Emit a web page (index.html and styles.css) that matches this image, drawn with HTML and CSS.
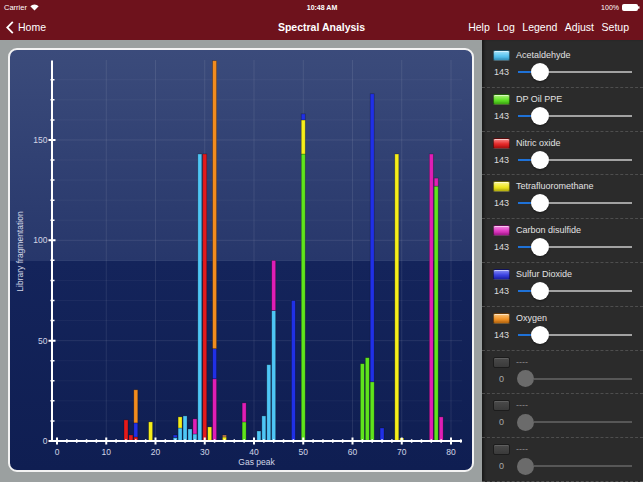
FILE: index.html
```html
<!DOCTYPE html>
<html>
<head>
<meta charset="utf-8">
<title>Spectral Analysis</title>
<link rel="stylesheet" href="styles.css">
</head>
<body>
<div class="app">
  <header class="topbar">
    <div class="status">
      <div class="status-left">
        <span>Carrier</span>
        <svg class="wifi" width="9" height="7" viewBox="0 0 9 7"><path d="M4.5 6.6 L0.3 2.3 A6 6 0 0 1 8.7 2.3 Z" fill="#fff"/></svg>
      </div>
      <div class="status-time">10:48 AM</div>
      <div class="status-right">
        <span>100%</span>
        <svg class="battery" width="18" height="7" viewBox="0 0 18 7"><rect x="0.5" y="0.5" width="15" height="6" rx="1" fill="#fff" stroke="#fff"/><rect x="16" y="2.3" width="1.5" height="2.4" fill="#fff"/></svg>
      </div>
    </div>
    <nav class="nav">
      <div class="back">
        <svg class="chev" width="8" height="13" viewBox="0 0 8 13"><polyline points="6.8,0.8 1.2,6.5 6.8,12.2" fill="none" stroke="#fff" stroke-width="1.8"/></svg>
        <span>Home</span>
      </div>
      <div class="title">Spectral Analysis</div>
      <div class="actions">
        <span>Help</span><span>Log</span><span>Legend</span><span>Adjust</span><span>Setup</span>
      </div>
    </nav>
  </header>
  <main class="main">
    <section class="chart-area">
      <div class="panel">
        <svg class="chart" width="462" height="420" viewBox="10 50 462 420">
          <g class="grid-minor" stroke="rgba(255,255,255,0.045)" stroke-width="1">
            <path d="M52 420.93H462M52 400.86H462M52 380.79H462M52 360.72H462M52 320.58H462M52 300.51H462M52 280.44H462M52 260.37H462M52 220.23H462M52 200.16H462M52 180.09H462M52 160.02H462M52 119.88H462M52 99.81H462M52 79.74H462"/>
          </g>
          <g class="grid-major" stroke="rgba(255,255,255,0.09)" stroke-width="1">
            <path d="M52 340.65H462M52 240.3H462M52 139.95H462"/>
            <path d="M106.25 60V441M155.5 60V441M204.75 60V441M254 60V441M303.25 60V441M352.5 60V441M401.75 60V441M451 60V441"/>
          </g>
          <g class="bars" stroke="rgba(0,0,0,0.35)" stroke-width="0.7">
            <rect x="124" y="419.9" width="4" height="21.1" fill="#e41a1c"/>
            <rect x="128.9" y="435" width="4" height="6" fill="#e41a1c"/>
            <rect x="133.8" y="437" width="4" height="4" fill="#e41a1c"/>
            <rect x="133.8" y="422.9" width="4" height="14.1" fill="#2030e6"/>
            <rect x="133.8" y="389.8" width="4" height="33.1" fill="#f28c1e"/>
            <rect x="148.6" y="421.9" width="4" height="19.1" fill="#f6ee1a"/>
            <rect x="173.2" y="437.4" width="4" height="3.6" fill="#4ec6f6"/>
            <rect x="173.2" y="435" width="4" height="2.4" fill="#2030e6"/>
            <rect x="178.1" y="428" width="4" height="13" fill="#4ec6f6"/>
            <rect x="178.1" y="416.9" width="4" height="11.1" fill="#f6ee1a"/>
            <rect x="183.05" y="415.9" width="4" height="25.1" fill="#4ec6f6"/>
            <rect x="188" y="429" width="4" height="12" fill="#4ec6f6"/>
            <rect x="192.9" y="434" width="4" height="7" fill="#4ec6f6"/>
            <rect x="192.9" y="418.9" width="4" height="15.1" fill="#e01eb6"/>
            <rect x="197.8" y="154" width="4" height="287" fill="#4ec6f6"/>
            <rect x="202.75" y="154" width="4" height="287" fill="#e41a1c"/>
            <rect x="207.7" y="426.95" width="4" height="14.05" fill="#f6ee1a"/>
            <rect x="212.6" y="378.8" width="4" height="62.2" fill="#e01eb6"/>
            <rect x="212.6" y="348.7" width="4" height="30.1" fill="#2030e6"/>
            <rect x="212.6" y="60.7" width="4" height="288" fill="#f28c1e"/>
            <rect x="222.45" y="437" width="4" height="4" fill="#f6ee1a"/>
            <rect x="222.45" y="435" width="4" height="2" fill="#c07a50"/>
            <rect x="242.15" y="421.9" width="4" height="19.1" fill="#5fe41c"/>
            <rect x="242.15" y="402.9" width="4" height="19" fill="#e01eb6"/>
            <rect x="256.9" y="431" width="4" height="10" fill="#4ec6f6"/>
            <rect x="261.85" y="415.9" width="4" height="25.1" fill="#4ec6f6"/>
            <rect x="266.8" y="364.7" width="4" height="76.3" fill="#4ec6f6"/>
            <rect x="271.7" y="310.5" width="4" height="130.5" fill="#4ec6f6"/>
            <rect x="271.7" y="260.4" width="4" height="50.1" fill="#e01eb6"/>
            <rect x="291.4" y="300.5" width="4" height="140.5" fill="#2030e6"/>
            <rect x="301.25" y="154" width="4" height="287" fill="#5fe41c"/>
            <rect x="301.25" y="119.9" width="4" height="34.1" fill="#f6ee1a"/>
            <rect x="301.25" y="113.9" width="4" height="6" fill="#2030e6"/>
            <rect x="360.35" y="363.7" width="4" height="77.3" fill="#5fe41c"/>
            <rect x="365.3" y="357.7" width="4" height="83.3" fill="#5fe41c"/>
            <rect x="370.2" y="381.8" width="4" height="59.2" fill="#5fe41c"/>
            <rect x="370.2" y="93.8" width="4" height="288" fill="#2030e6"/>
            <rect x="380.05" y="428" width="4" height="13" fill="#2030e6"/>
            <rect x="394.8" y="154" width="4" height="287" fill="#f6ee1a"/>
            <rect x="399.75" y="438" width="4" height="3" fill="#f6ee1a"/>
            <rect x="429.3" y="154" width="4" height="287" fill="#e01eb6"/>
            <rect x="434.2" y="186.1" width="4" height="254.9" fill="#5fe41c"/>
            <rect x="434.2" y="178.1" width="4" height="8" fill="#e01eb6"/>
            <rect x="439.15" y="416.9" width="4" height="24.1" fill="#e01eb6"/>
          </g>
          <g class="axes" stroke="#ffffff" fill="none">
            <path d="M52 60.5V442" stroke-width="2"/>
            <path d="M51 441H462" stroke-width="2"/>
            <path stroke-width="1.5" d="M50.5 420.93H54.5M50.5 400.86H54.5M50.5 380.79H54.5M50.5 360.72H54.5M50.5 320.58H54.5M50.5 300.51H54.5M50.5 280.44H54.5M50.5 260.37H54.5M50.5 220.23H54.5M50.5 200.16H54.5M50.5 180.09H54.5M50.5 160.02H54.5M50.5 119.88H54.5M50.5 99.81H54.5M50.5 79.74H54.5"/>
            <path stroke-width="2" d="M48.5 340.65H55.5M48.5 240.3H55.5M48.5 139.95H55.5M48.5 441H55.5"/>
            <path stroke-width="1.5" d="M66.85 439.3V442.7M76.7 439.3V442.7M86.55 439.3V442.7M96.4 439.3V442.7M116.1 439.3V442.7M125.95 439.3V442.7M135.8 439.3V442.7M145.65 439.3V442.7M165.35 439.3V442.7M175.2 439.3V442.7M185.05 439.3V442.7M194.9 439.3V442.7M214.6 439.3V442.7M224.45 439.3V442.7M234.3 439.3V442.7M244.15 439.3V442.7M263.85 439.3V442.7M273.7 439.3V442.7M283.55 439.3V442.7M293.4 439.3V442.7M313.1 439.3V442.7M322.95 439.3V442.7M332.8 439.3V442.7M342.65 439.3V442.7M362.35 439.3V442.7M372.2 439.3V442.7M382.05 439.3V442.7M391.9 439.3V442.7M411.6 439.3V442.7M421.45 439.3V442.7M431.3 439.3V442.7M441.15 439.3V442.7M460.85 439.3V442.7"/>
            <path stroke-width="2" d="M57 437.5V444.5M106.25 437.5V444.5M155.5 437.5V444.5M204.75 437.5V444.5M254 437.5V444.5M303.25 437.5V444.5M352.5 437.5V444.5M401.75 437.5V444.5M451 437.5V444.5"/>
          </g>
          <g class="labels">
            <text x="47.5" y="143" text-anchor="end">150</text>
            <text x="47.5" y="243.3" text-anchor="end">100</text>
            <text x="47.5" y="343.7" text-anchor="end">50</text>
            <text x="47.5" y="444" text-anchor="end">0</text>
            <text x="57" y="454.5" text-anchor="middle">0</text>
            <text x="106.25" y="454.5" text-anchor="middle">10</text>
            <text x="155.5" y="454.5" text-anchor="middle">20</text>
            <text x="204.75" y="454.5" text-anchor="middle">30</text>
            <text x="254" y="454.5" text-anchor="middle">40</text>
            <text x="303.25" y="454.5" text-anchor="middle">50</text>
            <text x="352.5" y="454.5" text-anchor="middle">60</text>
            <text x="401.75" y="454.5" text-anchor="middle">70</text>
            <text x="451" y="454.5" text-anchor="middle">80</text>
            <text x="256.5" y="464.5" text-anchor="middle">Gas peak</text>
            <text x="0" y="0" text-anchor="middle" transform="translate(23 251.5) rotate(-90)">Library fragmentation</text>
          </g>
        </svg>
      </div>
    </section>
    <aside class="sidebar">
      <div class="gas">
        <span class="sw sw-lightblue"></span><span class="name">Acetaldehyde</span>
        <span class="val">143</span>
        <div class="slider"><span class="fill"></span><span class="thumb"></span><span class="rest"></span></div>
      </div>
      <div class="gas">
        <span class="sw sw-green"></span><span class="name">DP Oil PPE</span>
        <span class="val">143</span>
        <div class="slider"><span class="fill"></span><span class="thumb"></span><span class="rest"></span></div>
      </div>
      <div class="gas">
        <span class="sw sw-red"></span><span class="name">Nitric oxide</span>
        <span class="val">143</span>
        <div class="slider"><span class="fill"></span><span class="thumb"></span><span class="rest"></span></div>
      </div>
      <div class="gas">
        <span class="sw sw-yellow"></span><span class="name">Tetrafluoromethane</span>
        <span class="val">143</span>
        <div class="slider"><span class="fill"></span><span class="thumb"></span><span class="rest"></span></div>
      </div>
      <div class="gas">
        <span class="sw sw-magenta"></span><span class="name">Carbon disulfide</span>
        <span class="val">143</span>
        <div class="slider"><span class="fill"></span><span class="thumb"></span><span class="rest"></span></div>
      </div>
      <div class="gas">
        <span class="sw sw-blue"></span><span class="name">Sulfur Dioxide</span>
        <span class="val">143</span>
        <div class="slider"><span class="fill"></span><span class="thumb"></span><span class="rest"></span></div>
      </div>
      <div class="gas">
        <span class="sw sw-orange"></span><span class="name">Oxygen</span>
        <span class="val">143</span>
        <div class="slider"><span class="fill"></span><span class="thumb"></span><span class="rest"></span></div>
      </div>
      <div class="gas empty">
        <span class="sw sw-empty"></span><span class="name">----</span>
        <span class="val">0</span>
        <div class="slider"><span class="thumb"></span><span class="rest"></span></div>
      </div>
      <div class="gas empty">
        <span class="sw sw-empty"></span><span class="name">----</span>
        <span class="val">0</span>
        <div class="slider"><span class="thumb"></span><span class="rest"></span></div>
      </div>
      <div class="gas empty">
        <span class="sw sw-empty"></span><span class="name">----</span>
        <span class="val">0</span>
        <div class="slider"><span class="thumb"></span><span class="rest"></span></div>
      </div>
    </aside>
  </main>
</div>
</body>
</html>
```
FILE: styles.css
```css
html, body {
  margin: 0;
  padding: 0;
}
body {
  width: 643px;
  height: 482px;
  overflow: hidden;
  font-family: "Liberation Sans", Arial, sans-serif;
  background: #9ba0a0;
  color: #fff;
}
.app {
  display: flex;
  flex-direction: column;
  height: 482px;
}

/* ---------- top bars ---------- */
.topbar {
  background: #6e121c;
}
.status {
  height: 14px;
  display: grid;
  grid-template-columns: 1fr auto 1fr;
  align-items: center;
  padding: 0 3px 0 4px;
  font-size: 7.5px;
}
.status-left {
  display: flex;
  align-items: center;
  gap: 3px;
}
.status-time {
  font-weight: bold;
  font-size: 7px;
}
.status-right {
  justify-self: end;
  display: flex;
  align-items: center;
  gap: 3px;
  font-size: 7px;
}
.wifi, .battery, .chev {
  display: block;
}
.nav {
  height: 26px;
  display: grid;
  grid-template-columns: 1fr auto 1fr;
  align-items: center;
  padding: 0 6px;
  font-size: 10.5px;
}
.back {
  display: flex;
  align-items: center;
  gap: 4px;
}
.title {
  font-weight: bold;
}
.actions {
  justify-self: end;
  display: flex;
  gap: 7.5px;
  padding-right: 8px;
}

/* ---------- main ---------- */
.main {
  display: flex;
  height: 442px;
}
.chart-area {
  width: 482px;
  box-sizing: border-box;
  padding: 8px 8px 10px 8px;
}
.panel {
  width: 466px;
  height: 424px;
  box-sizing: border-box;
  border: 2px solid #f3f3f3;
  border-radius: 9px;
  overflow: hidden;
  background: linear-gradient(to bottom, #3b4b7b 0%, #27376b 50.2%, #14245b 50.2%, #0f1e52 100%);
}
.chart {
  display: block;
}
.labels text {
  font-family: "Liberation Sans", Arial, sans-serif;
  font-size: 8.5px;
  fill: #d2d6e6;
}

/* ---------- sidebar ---------- */
.sidebar {
  width: 161px;
  background: #2b2b2b;
  padding-top: 4px;
  box-shadow: inset 3px 0 3px -1px rgba(0, 0, 0, 0.45);
}
.gas {
  height: 43.8px;
  box-sizing: border-box;
  display: grid;
  grid-template-columns: 17px 1fr;
  grid-template-rows: 11px 18px;
  column-gap: 6px;
  row-gap: 2px;
  align-items: center;
  padding: 6px 11px 0 11px;
  border-bottom: 1px dashed #4e4e4e;
}
.sw {
  width: 17px;
  height: 11px;
  box-sizing: border-box;
  border-radius: 2px;
  border: 1px solid rgba(0, 0, 0, 0.55);
  box-shadow: inset 0 1px 0 rgba(255, 255, 255, 0.55), inset 0 -2px 2px rgba(0, 0, 0, 0.15);
}
.sw-lightblue { background: linear-gradient(#a6e4fb, #5cc6f1 55%, #3fb0e2); }
.sw-green { background: linear-gradient(#b0f57a, #62e22a 55%, #48c816); }
.sw-red { background: linear-gradient(#f88a8a, #e52a2a 55%, #c81414); }
.sw-yellow { background: linear-gradient(#fbf890, #efe924 55%, #d6cf10); }
.sw-magenta { background: linear-gradient(#f48ae0, #e03cc4 55%, #c41ea8); }
.sw-blue { background: linear-gradient(#8a90f6, #3c44e2 55%, #2228c4); }
.sw-orange { background: linear-gradient(#fbc47a, #f2952a 55%, #d87a14); }
.sw-empty {
  background: linear-gradient(#4a4a4a, #3a3a3a);
  border-color: #1c1c1c;
  box-shadow: inset 0 1px 0 rgba(255, 255, 255, 0.12);
}
.name {
  font-size: 9px;
  color: #e2e2e2;
  line-height: 11px;
  white-space: nowrap;
}
.val {
  font-size: 9px;
  color: #dcdcdc;
  text-align: center;
  line-height: 18px;
}
.slider {
  display: flex;
  align-items: center;
  height: 18px;
  margin-left: 2px;
}
.fill {
  width: 13px;
  height: 2px;
  background: #1f72d8;
}
.thumb {
  width: 18px;
  height: 18px;
  flex: none;
  border-radius: 50%;
  background: #fff;
  box-shadow: 0 1px 2px rgba(0, 0, 0, 0.45);
}
.rest {
  flex: 1;
  height: 2px;
  background: #a2a2a2;
}
.empty .name {
  color: #8a8a8a;
}
.empty .val {
  color: #a8a8a8;
}
.empty .slider {
  margin-left: 1px;
}
.empty .thumb {
  width: 17px;
  height: 17px;
  background: #6b6b6b;
  box-shadow: none;
}
.empty .rest {
  background: #575757;
}
```
